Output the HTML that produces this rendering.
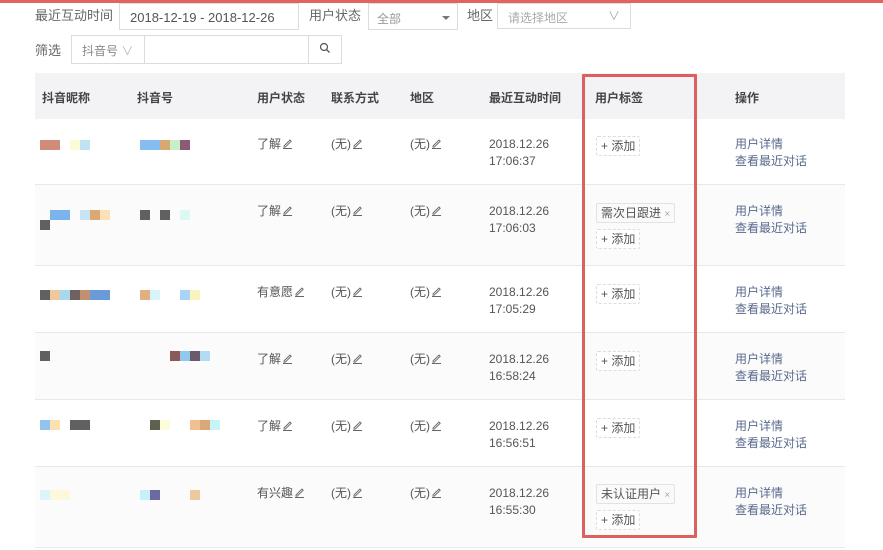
<!DOCTYPE html>
<html><head><meta charset="utf-8"><style>
*{margin:0;padding:0;box-sizing:border-box}
body{width:883px;height:550px;background:#fff;position:relative;overflow:hidden;font-family:"Liberation Sans","Noto Sans CJK SC",sans-serif;font-size:12px;color:#555}
.a{position:absolute;white-space:nowrap}
.lbl{color:#666;font-size:13px}
.box{position:absolute;border:1px solid #dcdcdc;background:#fff;color:#555;font-size:13px}
.row{position:absolute;left:35px;width:810px;border-bottom:1px solid #e8e8e8}
.px{position:absolute;width:10px;height:10px}
.t{position:absolute;line-height:17px;color:#555}
.tag{position:absolute;border:1px solid #e2e2e2;border-radius:2px;background:#fafafa;height:20px;line-height:18px;padding:0 4px;color:#555;font-size:12px}
.add{position:absolute;border:1px dashed #ddd;border-radius:2px;height:20px;line-height:18px;padding:0 4px;color:#555;font-size:12px;background:#fff}
.op{position:absolute;color:#5a6a8c;line-height:17px}
svg.p{display:inline-block;vertical-align:-1px;margin-left:1px}
</style></head><body>
<div class="a" style="left:0;top:0;width:883px;height:3px;background:#e06462"></div>

<div class="a lbl" style="left:35px;top:5px">最近互动时间</div>
<div class="box" style="left:119px;top:3px;width:180px;height:27px;padding:6px 10px">2018-12-19 - 2018-12-26</div>
<div class="a lbl" style="left:309px;top:5px">用户状态</div>
<div class="box" style="left:368px;top:3px;width:90px;height:27px;padding:6px 8px;color:#999;font-size:12px">全部<span style="position:absolute;right:7px;top:12px;border:4px solid transparent;border-top:4px solid #777"></span></div>
<div class="a lbl" style="left:467px;top:5px">地区</div>
<div class="box" style="left:497px;top:3px;width:134px;height:26px;padding:5px 10px;color:#aaa;font-size:12px">请选择地区<span style="position:absolute;right:10px;top:3px;color:#aaa">∨</span></div>

<div class="a lbl" style="left:35px;top:40px">筛选</div>
<div class="box" style="left:71px;top:35px;width:74px;height:29px;padding:6px 10px;color:#888;font-size:12px">抖音号 <span style="color:#bbb">∨</span></div>
<div class="box" style="left:144px;top:35px;width:165px;height:29px"></div>
<div class="box" style="left:308px;top:35px;width:34px;height:29px;text-align:center;padding-top:6px">
<svg width="12" height="12" viewBox="0 0 12 12"><circle cx="5" cy="5" r="3.5" fill="none" stroke="#555" stroke-width="1.2"/><path d="M7.5 7.5L10.5 10.5" stroke="#555" stroke-width="1.3"/></svg></div>

<div class="a" style="left:35px;top:73px;width:810px;height:46px;background:#f3f3f5"></div>
<div class="a" style="left:42px;top:89px;font-weight:bold;color:#444">抖音昵称</div>
<div class="a" style="left:137px;top:89px;font-weight:bold;color:#444">抖音号</div>
<div class="a" style="left:257px;top:89px;font-weight:bold;color:#444">用户状态</div>
<div class="a" style="left:331px;top:89px;font-weight:bold;color:#444">联系方式</div>
<div class="a" style="left:410px;top:89px;font-weight:bold;color:#444">地区</div>
<div class="a" style="left:489px;top:89px;font-weight:bold;color:#444">最近互动时间</div>
<div class="a" style="left:595px;top:89px;font-weight:bold;color:#444">用户标签</div>
<div class="a" style="left:735px;top:89px;font-weight:bold;color:#444">操作</div>

<div class="row" style="top:118px;height:67px"></div>
<div class="row" style="top:185px;height:81px;background:#fbfbfc"></div>
<div class="row" style="top:266px;height:67px"></div>
<div class="row" style="top:333px;height:67px;background:#fbfbfc"></div>
<div class="row" style="top:400px;height:67px"></div>
<div class="row" style="top:467px;height:81px;background:#fbfbfc"></div>

<!-- pixel blocks -->
<div class="px" style="left:40px;top:140px;width:20px;background:#cf8c78"></div>
<div class="px" style="left:70px;top:140px;background:#fbfbd8"></div>
<div class="px" style="left:80px;top:140px;background:#bfe3f0"></div>
<div class="px" style="left:140px;top:140px;width:20px;background:#86bdf0"></div>
<div class="px" style="left:160px;top:140px;background:#d8a870"></div>
<div class="px" style="left:170px;top:140px;background:#c8f0c8"></div>
<div class="px" style="left:180px;top:140px;background:#8a5a78"></div>

<div class="px" style="left:50px;top:210px;width:20px;background:#7ab4ea"></div>
<div class="px" style="left:80px;top:210px;background:#c8e4f4"></div>
<div class="px" style="left:90px;top:210px;background:#daa870"></div>
<div class="px" style="left:100px;top:210px;background:#fbe0b8"></div>
<div class="px" style="left:40px;top:220px;background:#606060"></div>
<div class="px" style="left:140px;top:210px;background:#606060"></div>
<div class="px" style="left:160px;top:210px;background:#606060"></div>
<div class="px" style="left:180px;top:210px;background:#dcf8f4"></div>

<div class="px" style="left:40px;top:290px;background:#606060"></div>
<div class="px" style="left:50px;top:290px;background:#f0c8a0"></div>
<div class="px" style="left:60px;top:290px;background:#a8d8f0"></div>
<div class="px" style="left:70px;top:290px;background:#706060"></div>
<div class="px" style="left:80px;top:290px;background:#c09070"></div>
<div class="px" style="left:90px;top:290px;width:20px;background:#6a9ad8"></div>
<div class="px" style="left:140px;top:290px;background:#e0b080"></div>
<div class="px" style="left:150px;top:290px;background:#d8f4f8"></div>
<div class="px" style="left:180px;top:290px;background:#a8d4f8"></div>
<div class="px" style="left:190px;top:290px;background:#f8f4c0"></div>

<div class="px" style="left:40px;top:351px;background:#606060"></div>
<div class="px" style="left:170px;top:351px;background:#8a5a5a"></div>
<div class="px" style="left:180px;top:351px;background:#90c8f0"></div>
<div class="px" style="left:190px;top:351px;background:#6a5a6a"></div>
<div class="px" style="left:200px;top:351px;background:#b0dcf4"></div>

<div class="px" style="left:40px;top:420px;background:#90c4ee"></div>
<div class="px" style="left:50px;top:420px;background:#fbe0b0"></div>
<div class="px" style="left:70px;top:420px;width:20px;background:#606060"></div>
<div class="px" style="left:150px;top:420px;background:#606050"></div>
<div class="px" style="left:160px;top:420px;background:#fcfcd8"></div>
<div class="px" style="left:190px;top:420px;background:#f0c090"></div>
<div class="px" style="left:200px;top:420px;background:#daa878"></div>
<div class="px" style="left:210px;top:420px;background:#c8f4f8"></div>

<div class="px" style="left:40px;top:490px;background:#dcf4fa"></div>
<div class="px" style="left:50px;top:490px;width:20px;background:#fcf8dc"></div>
<div class="px" style="left:140px;top:490px;background:#c8f0f8"></div>
<div class="px" style="left:150px;top:490px;background:#6a6aa0"></div>
<div class="px" style="left:190px;top:490px;background:#f0c8a0"></div>

<!-- row text -->
<div class="t" style="left:257px;top:136px">了解<svg class="p" width="11" height="11" viewBox="0 0 11 11"><path d="M2 8L8 2l1.2 1.2-6 6H2z M1 10.5h9" fill="none" stroke="#666" stroke-width="0.9"/></svg></div>
<div class="t" style="left:331px;top:136px">(无)<svg class="p" width="11" height="11" viewBox="0 0 11 11"><path d="M2 8L8 2l1.2 1.2-6 6H2z M1 10.5h9" fill="none" stroke="#666" stroke-width="0.9"/></svg></div>
<div class="t" style="left:410px;top:136px">(无)<svg class="p" width="11" height="11" viewBox="0 0 11 11"><path d="M2 8L8 2l1.2 1.2-6 6H2z M1 10.5h9" fill="none" stroke="#666" stroke-width="0.9"/></svg></div>
<div class="t" style="left:489px;top:136px">2018.12.26<br>17:06:37</div>
<div class="add" style="left:596px;top:136px">+ 添加</div>
<div class="op" style="left:735px;top:136px">用户详情<br>查看最近对话</div>

<div class="t" style="left:257px;top:203px">了解<svg class="p" width="11" height="11" viewBox="0 0 11 11"><path d="M2 8L8 2l1.2 1.2-6 6H2z M1 10.5h9" fill="none" stroke="#666" stroke-width="0.9"/></svg></div>
<div class="t" style="left:331px;top:203px">(无)<svg class="p" width="11" height="11" viewBox="0 0 11 11"><path d="M2 8L8 2l1.2 1.2-6 6H2z M1 10.5h9" fill="none" stroke="#666" stroke-width="0.9"/></svg></div>
<div class="t" style="left:410px;top:203px">(无)<svg class="p" width="11" height="11" viewBox="0 0 11 11"><path d="M2 8L8 2l1.2 1.2-6 6H2z M1 10.5h9" fill="none" stroke="#666" stroke-width="0.9"/></svg></div>
<div class="t" style="left:489px;top:203px">2018.12.26<br>17:06:03</div>
<div class="tag" style="left:596px;top:203px">需次日跟进 <span style="color:#aaa;font-size:10px">×</span></div>
<div class="add" style="left:596px;top:229px">+ 添加</div>
<div class="op" style="left:735px;top:203px">用户详情<br>查看最近对话</div>

<div class="t" style="left:257px;top:284px">有意愿<svg class="p" width="11" height="11" viewBox="0 0 11 11"><path d="M2 8L8 2l1.2 1.2-6 6H2z M1 10.5h9" fill="none" stroke="#666" stroke-width="0.9"/></svg></div>
<div class="t" style="left:331px;top:284px">(无)<svg class="p" width="11" height="11" viewBox="0 0 11 11"><path d="M2 8L8 2l1.2 1.2-6 6H2z M1 10.5h9" fill="none" stroke="#666" stroke-width="0.9"/></svg></div>
<div class="t" style="left:410px;top:284px">(无)<svg class="p" width="11" height="11" viewBox="0 0 11 11"><path d="M2 8L8 2l1.2 1.2-6 6H2z M1 10.5h9" fill="none" stroke="#666" stroke-width="0.9"/></svg></div>
<div class="t" style="left:489px;top:284px">2018.12.26<br>17:05:29</div>
<div class="add" style="left:596px;top:284px">+ 添加</div>
<div class="op" style="left:735px;top:284px">用户详情<br>查看最近对话</div>

<div class="t" style="left:257px;top:351px">了解<svg class="p" width="11" height="11" viewBox="0 0 11 11"><path d="M2 8L8 2l1.2 1.2-6 6H2z M1 10.5h9" fill="none" stroke="#666" stroke-width="0.9"/></svg></div>
<div class="t" style="left:331px;top:351px">(无)<svg class="p" width="11" height="11" viewBox="0 0 11 11"><path d="M2 8L8 2l1.2 1.2-6 6H2z M1 10.5h9" fill="none" stroke="#666" stroke-width="0.9"/></svg></div>
<div class="t" style="left:410px;top:351px">(无)<svg class="p" width="11" height="11" viewBox="0 0 11 11"><path d="M2 8L8 2l1.2 1.2-6 6H2z M1 10.5h9" fill="none" stroke="#666" stroke-width="0.9"/></svg></div>
<div class="t" style="left:489px;top:351px">2018.12.26<br>16:58:24</div>
<div class="add" style="left:596px;top:351px">+ 添加</div>
<div class="op" style="left:735px;top:351px">用户详情<br>查看最近对话</div>

<div class="t" style="left:257px;top:418px">了解<svg class="p" width="11" height="11" viewBox="0 0 11 11"><path d="M2 8L8 2l1.2 1.2-6 6H2z M1 10.5h9" fill="none" stroke="#666" stroke-width="0.9"/></svg></div>
<div class="t" style="left:331px;top:418px">(无)<svg class="p" width="11" height="11" viewBox="0 0 11 11"><path d="M2 8L8 2l1.2 1.2-6 6H2z M1 10.5h9" fill="none" stroke="#666" stroke-width="0.9"/></svg></div>
<div class="t" style="left:410px;top:418px">(无)<svg class="p" width="11" height="11" viewBox="0 0 11 11"><path d="M2 8L8 2l1.2 1.2-6 6H2z M1 10.5h9" fill="none" stroke="#666" stroke-width="0.9"/></svg></div>
<div class="t" style="left:489px;top:418px">2018.12.26<br>16:56:51</div>
<div class="add" style="left:596px;top:418px">+ 添加</div>
<div class="op" style="left:735px;top:418px">用户详情<br>查看最近对话</div>

<div class="t" style="left:257px;top:485px">有兴趣<svg class="p" width="11" height="11" viewBox="0 0 11 11"><path d="M2 8L8 2l1.2 1.2-6 6H2z M1 10.5h9" fill="none" stroke="#666" stroke-width="0.9"/></svg></div>
<div class="t" style="left:331px;top:485px">(无)<svg class="p" width="11" height="11" viewBox="0 0 11 11"><path d="M2 8L8 2l1.2 1.2-6 6H2z M1 10.5h9" fill="none" stroke="#666" stroke-width="0.9"/></svg></div>
<div class="t" style="left:410px;top:485px">(无)<svg class="p" width="11" height="11" viewBox="0 0 11 11"><path d="M2 8L8 2l1.2 1.2-6 6H2z M1 10.5h9" fill="none" stroke="#666" stroke-width="0.9"/></svg></div>
<div class="t" style="left:489px;top:485px">2018.12.26<br>16:55:30</div>
<div class="tag" style="left:596px;top:484px">未认证用户 <span style="color:#aaa;font-size:10px">×</span></div>
<div class="add" style="left:596px;top:510px">+ 添加</div>
<div class="op" style="left:735px;top:485px">用户详情<br>查看最近对话</div>

<div class="a" style="left:582px;top:74px;width:115px;height:464px;border:3px solid #de605e;border-radius:1px"></div>
</body></html>
